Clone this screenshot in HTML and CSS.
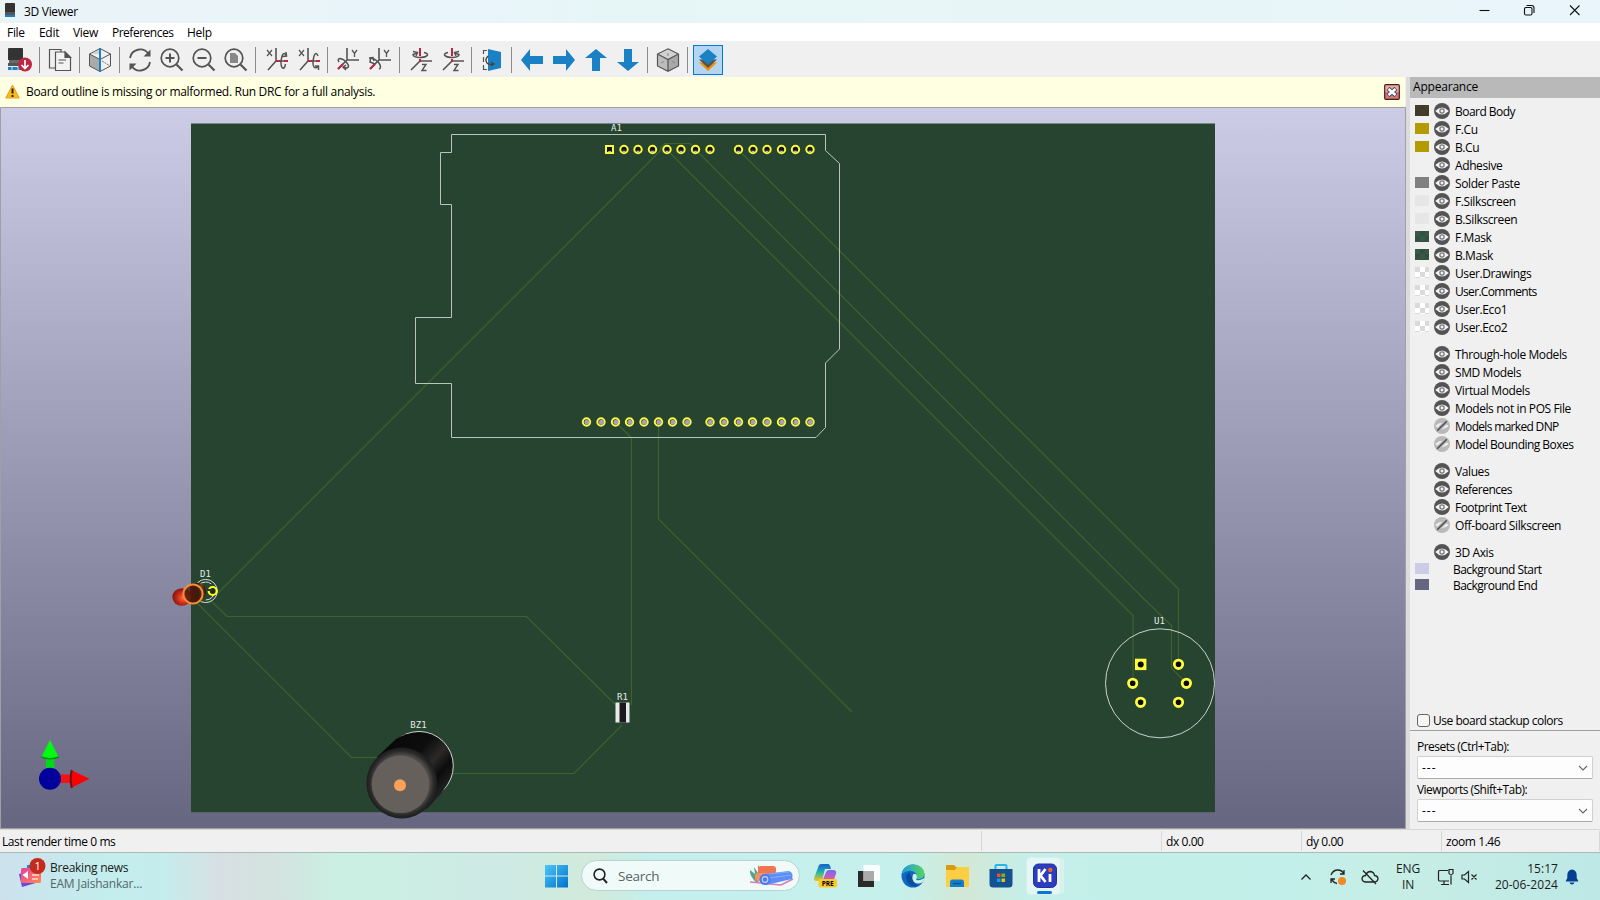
FILE: index.html
```html
<!DOCTYPE html>
<html lang="en">
<head>
<meta charset="utf-8">
<title>3D Viewer</title>
<link rel="stylesheet" href="styles.css">
</head>
<body>
<svg class="defs" width="0" height="0">
  <symbol id="eye" viewBox="0 0 16 16"><circle cx="8" cy="8" r="8" fill="#545454"/><path d="M1.2 8Q8 1 14.8 8Q8 15 1.2 8Z" fill="#f4f4f4"/><circle cx="8" cy="8" r="2.1" fill="#f4f4f4" stroke="#777" stroke-width="1.3"/></symbol>
  <symbol id="off" viewBox="0 0 16 16"><circle cx="8" cy="8" r="8" fill="#b9b9b9"/><path d="M1.2 8Q8 1.5 14.8 8Q8 14.5 1.2 8Z" fill="#efefef"/><path d="M3 13L13 3" stroke="#b9b9b9" stroke-width="4"/><path d="M3.2 12.8L12.8 3.2" stroke="#4d4d4d" stroke-width="1.5"/></symbol>
  <symbol id="rotx" viewBox="0 0 24 24"><path d="M10 0V13L2 22M10 13H22" fill="none" stroke="#545454" stroke-width="1.6"/><path d="M10 13H15M18 13H22" stroke="#bf2641" stroke-width="2"/><path d="M1 2L6 8M6 2L1 8" stroke="#545454" stroke-width="1.2"/></symbol>
  <symbol id="roty" viewBox="0 0 24 24"><path d="M11 0V12H23M11 12L2 21" fill="none" stroke="#545454" stroke-width="1.6"/><path d="M2 21L7 16" stroke="#bf2641" stroke-width="2.2"/><path d="M16 2L18.5 5.5L21 2M18.5 5.5V9" fill="none" stroke="#545454" stroke-width="1.3"/></symbol>
  <symbol id="rotz" viewBox="0 0 24 24"><path d="M1 22L10 13H22" fill="none" stroke="#545454" stroke-width="1.6"/><path d="M10 0V8M10 11V14" stroke="#bf2641" stroke-width="2"/><path d="M12 16.500H16L12 22.500H16.500" fill="none" stroke="#545454" stroke-width="1.400"/></symbol>
  <symbol id="cube" viewBox="0 0 24 24"><path d="M12 0.800L22.500 6V18L12 23.300L1.500 18V6Z" fill="#bdbdbd"/><path d="M12 .800L22.500 6L12 11.500L1.500 6Z" fill="#d2d2d2"/><path d="M12 11.500L22.500 6V18L12 23.300Z" fill="#a9a9a9"/><path d="M12 .800L22.500 6V18L12 23.300L1.500 18V6ZM1.500 6L12 11.500L22.500 6M12 11.500V23.300" fill="none" stroke="#545454" stroke-width="1.200"/><path d="M12 5V8M5 15L8 13.500M16 13.500L19 15" stroke="#888"/></symbol>
  <symbol id="lens" viewBox="0 0 24 24"><circle cx="10" cy="10" r="8.800" fill="none" stroke="#545454" stroke-width="1.700"/><path d="M16.500 16.500L22.500 22.500" stroke="#545454" stroke-width="2.200"/></symbol>
  <symbol id="arrow" viewBox="0 0 24 24"><path d="M1 12L10 1V8H23V16H10V23Z" fill="#1a81c4"/></symbol>
  <symbol id="padt" viewBox="-6 -6 12 12"><circle r="3.700" fill="#15150f" stroke="#fbfb3e" stroke-width="2"/><path d="M-1.800 1.300H1.800L1 2.700H-1Z" fill="#b5b5c8"/></symbol>
  <symbol id="padb" viewBox="-6 -6 12 12"><circle r="3.700" fill="#30302c" stroke="#fbfb3e" stroke-width="2"/><circle cx=".400" cy=".300" r="2.500" fill="#a3a2ba"/></symbol>
  <symbol id="padu" viewBox="-6 -6 12 12"><circle r="4.200" fill="#080808" stroke="#ffff40" stroke-width="2.800"/></symbol>
</svg>

<header class="title">
  <svg width="12" height="16" viewBox="0 0 12 16"><path d="M0 1Q0 0 1 0H9Q10 0 10 1V9H0Z" fill="#333"/><path d="M0 9H10V12H0Z" fill="#555"/><path d="M0 12H10V14H0Z" fill="#1a81c4"/></svg>
  <span class="title-text">3D Viewer</span>
  <svg class="winbtns" width="110" height="20" viewBox="0 0 110 20" fill="none" stroke="#111" stroke-width="1.100"><path d="M.500 10.500H10.500"/><rect x="45.500" y="7.500" width="7.500" height="7.500" rx="1.500"/><path d="M47.500 5.500H52.500Q55 5.500 55 8V13"/><path d="M91 5.500L100.500 15M100.500 5.500L91 15"/></svg>
</header>

<nav class="menu"><span class="m1">File</span><span class="m2">Edit</span><span class="m3">View</span><span class="m4">Preferences</span><span class="m5">Help</span></nav>

<div class="toolbar">
  <i><svg viewBox="0 0 24 24"><path d="M0 1Q0 0 1 0H14Q15 0 15 1V12H0Z" fill="#333"/><path d="M1 12H14V15H1Z" fill="#686868"/><path d="M0 15H15V18H0Z" fill="#545454"/><path d="M0 19H13V22H0Z" fill="#1a81c4"/><path d="M4 18V23M10 18V23" stroke="#ddd"/><circle cx="17" cy="16.500" r="7" fill="#bf2641"/><path d="M17 12V20M13.500 17L17 20.500L20.500 17" fill="none" stroke="#fff" stroke-width="1.700"/></svg></i><b></b>
  <i><svg viewBox="0 0 24 24" fill="#efefef" stroke="#545454" stroke-width="1.200"><path d="M1.500 1.500H13V20H1.500Z"/><path d="M7.500 4H17L22.500 9.500V22.500H7.500Z" fill="#f3f3f3"/><path d="M17 4V9.500H22.500Z" fill="#545454"/><path d="M10.500 12H18M10.500 15H15.500"/></svg></i><b></b>
  <i><svg viewBox="0 0 24 24"><path d="M1.500 6L12 11.500V23L1.500 18Z" fill="#aaa"/><path d="M12 .500L22.500 6V18L12 23.500L1.500 18V6ZM1.500 6L12 11.500L22.500 6" fill="none" stroke="#545454"/><path d="M11 6L3 6L11 2Z" fill="#d0d0d0"/><path d="M14 13L22 18" stroke="#777" stroke-dasharray="2 1"/><path d="M12 0V24" stroke="#1a81c4" stroke-width="2"/></svg></i><b></b>
  <i><svg viewBox="0 0 24 24" fill="none" stroke="#545454" stroke-width="1.800"><path d="M2 10A10.200 10.200 0 0 1 20.500 6M22 14A10.200 10.200 0 0 1 3.500 18"/><path d="M22.500 1.500V8.500H15.500ZM1.500 22.500V15.500H8.500Z" fill="#545454" stroke="none"/></svg></i>
  <i><svg viewBox="0 0 24 24"><use href="#lens"/><path d="M5.500 10H14.500M10 5.500V14.500" stroke="#545454" stroke-width="2"/></svg></i>
  <i><svg viewBox="0 0 24 24"><use href="#lens"/><path d="M5.500 10H14.500" stroke="#545454" stroke-width="2"/></svg></i>
  <i><svg viewBox="0 0 24 24"><use href="#lens"/><path d="M6 5H11L14 8V15H6Z" fill="#888"/></svg></i><b></b>
  <i><svg class="rx" viewBox="0 0 24 24"><use href="#rotx"/><path d="M20.500 8Q18 3 16 8Q14 16 16 19.500Q18.500 22 19.500 16M16.500 8.500L20.500 8L20 4" fill="none" stroke="#545454" stroke-width="1.500"/></svg></i>
  <i><svg class="rx" viewBox="0 0 24 24"><use href="#rotx"/><path d="M20 8Q18 3 16 8Q14 16 16 19Q18 21 20.500 18M17 18L20.500 18L20.500 22" fill="none" stroke="#545454" stroke-width="1.500"/></svg></i><b></b>
  <i><svg viewBox="0 0 24 24"><use href="#roty"/><path d="M3 14Q1 11 4 10.500Q8 11 11 15Q14 19 11 20L7 19M10 17L7 19L10 22" fill="none" stroke="#545454" stroke-width="1.500"/></svg></i>
  <i><svg viewBox="0 0 24 24"><use href="#roty"/><path d="M11 21Q14 20 11 15Q7 10 2.500 10.500L2 14L7 16M1 10L5 9.500L6 13" fill="none" stroke="#545454" stroke-width="1.500"/></svg></i><b></b>
  <i><svg class="rz" viewBox="0 0 24 24"><use href="#rotz"/><path d="M14 4.500Q18 5.500 17.500 7Q16 9.500 9 9.500Q3 9 3 6.500L7 5M3 3.500L7.500 4.500L6 8" fill="none" stroke="#545454" stroke-width="1.500"/></svg></i>
  <i><svg class="rz" viewBox="0 0 24 24"><use href="#rotz"/><path d="M6 4.500Q2 5.500 2.500 7Q4 9.500 11 9.500Q17 9 17 6.500L13 5M17 3.500L12.500 4.500L14 8" fill="none" stroke="#545454" stroke-width="1.500"/></svg></i><b></b>
  <i><svg viewBox="0 0 24 24"><path d="M8 1L21 4V20L8 23Z" fill="#1a81c4"/><path d="M7 2.500H3.500V6M3.500 9V14M3.500 17V21.500H7" fill="none" stroke="#545454" stroke-width="1.200"/><path d="M8 8Q4.500 12 7 15Q9 17 13 16M11 14L14 16L11 18" fill="none" stroke="#454545" stroke-width="1.300"/></svg></i><b></b>
  <i><svg viewBox="0 0 24 24"><use href="#arrow"/></svg></i>
  <i><svg viewBox="0 0 24 24"><use href="#arrow" transform="rotate(180 12 12)"/></svg></i>
  <i><svg viewBox="0 0 24 24"><use href="#arrow" transform="rotate(90 12 12)"/></svg></i>
  <i><svg viewBox="0 0 24 24"><use href="#arrow" transform="rotate(-90 12 12)"/></svg></i><b></b>
  <i><svg viewBox="0 0 24 24"><use href="#cube"/></svg></i><b></b>
  <i class="active"><svg viewBox="0 0 24 24"><path d="M3 14.500L12 23L21 14.500H3Z" fill="#f29100"/><path d="M3 11.500H21L12 20Z" fill="#545454"/><path d="M12 1L21 8.500L12 16.500L3 8.500Z" fill="#1a81c4"/></svg></i>
</div>

<main class="work">
  <section class="view">
    <div class="warn">
      <svg width="15" height="15" viewBox="0 0 15 15"><path d="M7.500 1L14.300 14H.700Z" fill="#fdb913" stroke="#e2a32e" stroke-linejoin="round"/><path d="M7.500 4.500V9.500M7.500 11V13" stroke="#222" stroke-width="1.900"/></svg>
      <span class="warn-text">Board outline is missing or malformed. Run DRC for a full analysis.</span>
      <svg class="dismiss" width="16" height="16" viewBox="0 0 16 16"><rect x=".700" y=".700" width="14.600" height="14.600" rx="1" fill="#cf786f" stroke="#521920" stroke-width="1.200"/><path d="M1.500 1.500H14.500V8H1.500Z" fill="#e5aaa2"/><path d="M4 4.500L12 11.500M12 4.500L4 11.500" stroke="#4c5468" stroke-width="4.500"/><path d="M4.500 5L11.500 11M11.500 5L4.500 11" stroke="#fff" stroke-width="2.400"/></svg>
    </div>
    <svg class="scene" width="1406" height="722" viewBox="0 107 1406 722">
      <defs>
        <linearGradient id="bg" x2="0" y2="1"><stop stop-color="#cccce6"/><stop offset="1" stop-color="#666680"/></linearGradient>
        <linearGradient id="side" gradientUnits="userSpaceOnUse" x1="385" y1="745" x2="440" y2="795"><stop stop-color="#080808"/><stop offset=".400" stop-color="#0e0e0e"/><stop offset=".620" stop-color="#2b2a29"/><stop offset=".800" stop-color="#0c0c0c"/><stop offset="1" stop-color="#222"/></linearGradient>
        <radialGradient id="rim"><stop offset=".800" stop-color="#4b4846"/><stop offset=".900" stop-color="#2c2b2b"/><stop offset="1" stop-color="#1c1c1c"/></radialGradient>
        <radialGradient id="led" cx=".580" cy=".550"><stop stop-color="#ff7040"/><stop offset=".500" stop-color="#d8361c"/><stop offset="1" stop-color="#931a12"/></radialGradient>
        <linearGradient id="brown"><stop stop-color="#7a1d10"/><stop offset=".500" stop-color="#3a1d0c"/><stop offset=".700" stop-color="#6a4a16"/><stop offset="1" stop-color="#2b1408"/></linearGradient>
      </defs>
      <rect y="107" width="1406" height="722" fill="url(#bg)"/>
      <path d="M.500 829V107.500H1405.500V829M0 828.500H1406" fill="none" stroke="#a0a0a0"/>
      <rect x="191" y="123.500" width="1024" height="688.700" fill="#264430"/>
      <g fill="none" stroke="#3f612e" stroke-width="1.200">
        <path d="M218 593L660.500 150.500V148L665 143.500H690L696 150L1145 600L1171.500 625.500V668L1186 683"/>
        <path d="M667 150L1133 615.500V683"/><path d="M738.500 150L1178.500 589V664"/>
        <path d="M615.500 422L631.500 438V705"/><path d="M658.500 422V519L852 712"/>
        <path d="M210 600L227 616.500H526.500L617 706"/><path d="M197 603L351.500 757.500H385"/><path d="M450 773.500H574L622 725"/>
      </g>
      <path d="M451.500 134.500H825.500V150.500L839.500 163.500V349L825.500 363V427.500L816 437.500H451.500V383.500H415.500V317.500H451.500V204.500H440.500V152.500H451.500Z" fill="none" stroke="#b9c5bc"/>
      <g class="silk"><text x="616.500" y="131">A1</text><text x="205.500" y="577">D1</text><text x="622.500" y="700">R1</text><text x="418.500" y="728">BZ1</text><text x="1159.500" y="624">U1</text></g>
      <rect x="606" y="146" width="7" height="7" fill="#15150f" stroke="#fbfb3e" stroke-width="2"/><path d="M608 151H611.500L611 152H608.500Z" fill="#b5b5c8"/>
      <g>
        <use href="#padt" x="618" y="143.500" width="12" height="12"/><use href="#padt" x="632" y="143.500" width="12" height="12"/><use href="#padt" x="646.500" y="143.500" width="12" height="12"/><use href="#padt" x="661" y="143.500" width="12" height="12"/><use href="#padt" x="675" y="143.500" width="12" height="12"/><use href="#padt" x="689.500" y="143.500" width="12" height="12"/><use href="#padt" x="704" y="143.500" width="12" height="12"/>
        <use href="#padt" x="732.500" y="143.500" width="12" height="12"/><use href="#padt" x="747" y="143.500" width="12" height="12"/><use href="#padt" x="761" y="143.500" width="12" height="12"/><use href="#padt" x="775.500" y="143.500" width="12" height="12"/><use href="#padt" x="789.500" y="143.500" width="12" height="12"/><use href="#padt" x="804" y="143.500" width="12" height="12"/>
      </g>
      <g>
        <use href="#padb" x="580.500" y="416" width="12" height="12"/><use href="#padb" x="595" y="416" width="12" height="12"/><use href="#padb" x="609.500" y="416" width="12" height="12"/><use href="#padb" x="623.500" y="416" width="12" height="12"/><use href="#padb" x="638" y="416" width="12" height="12"/><use href="#padb" x="652.500" y="416" width="12" height="12"/><use href="#padb" x="666.500" y="416" width="12" height="12"/><use href="#padb" x="681" y="416" width="12" height="12"/>
        <use href="#padb" x="704" y="416" width="12" height="12"/><use href="#padb" x="718" y="416" width="12" height="12"/><use href="#padb" x="732.500" y="416" width="12" height="12"/><use href="#padb" x="746.500" y="416" width="12" height="12"/><use href="#padb" x="761" y="416" width="12" height="12"/><use href="#padb" x="775.500" y="416" width="12" height="12"/><use href="#padb" x="789.500" y="416" width="12" height="12"/><use href="#padb" x="804" y="416" width="12" height="12"/>
      </g>
      <circle cx="1160" cy="683.300" r="54.500" fill="none" stroke="#c9d3cb"/>
      <rect x="1136.500" y="660.200" width="8.400" height="8.400" fill="#ffff40" stroke="#ffff40" stroke-width="3"/><circle cx="1140.700" cy="664.400" r="3" fill="#080808"/>
      <use href="#padu" x="1172.500" y="658.300" width="12" height="12"/><use href="#padu" x="1126.700" y="677.300" width="12" height="12"/><use href="#padu" x="1180.400" y="677.300" width="12" height="12"/><use href="#padu" x="1134.600" y="696.300" width="12" height="12"/><use href="#padu" x="1172.500" y="696.300" width="12" height="12"/>
      <g class="resistor"><rect x="615.500" y="702.500" width="14" height="20" fill="#e9e9e9"/><rect x="619.500" y="702.500" width="6.500" height="20" fill="#1a1a1a"/></g>
      <g class="buzzer"><circle cx="419" cy="765.800" r="34.300" fill="url(#side)" stroke="#cdd8d0"/><path d="M377 757L396 739Q410 730 430 734Q450 742 451.500 765Q451 781 440 795L427 809Z" fill="url(#side)"/><circle cx="401.800" cy="783" r="35.400" fill="url(#rim)"/><circle cx="400.500" cy="784.300" r="28.800" fill="#65605c"/><circle cx="400" cy="785.300" r="6" fill="#ffa057"/></g>
      <g class="diode" fill="none"><circle cx="205.700" cy="591" r="11.600" stroke="#d4ddd6"/><circle cx="205.700" cy="591" r="9" stroke="#d4ddd6" stroke-dasharray="14 3"/><circle cx="212.700" cy="591" r="4" fill="#1b2b1c" stroke="#ffff20" stroke-width="2.200"/><path d="M207 590H212" stroke="#333" stroke-width="2"/><path d="M190 585L196 583Q206 582 206 592Q205 601 196 604H190Z" fill="url(#brown)"/><ellipse cx="181.800" cy="597" rx="9.500" ry="8.800" fill="url(#led)"/><circle cx="193" cy="594" r="9.600" fill="#45180b" fill-opacity=".750" stroke="#f58d35" stroke-width="2"/></g>
      <g class="axes"><path d="M46 757H54.500V771H46Z" fill="#00d818"/><path d="M50 740L59 758H41Z" fill="#00fa12"/><path d="M41 757Q50 760.500 59 757" fill="none" stroke="#088a14" stroke-width="1.500"/><path d="M60 774.500H73V783H60Z" fill="#f01414"/><path d="M71 770L89.500 778.700L71 788Z" fill="#f00"/><path d="M71.800 770Q69.500 779 71.800 788" fill="none" stroke="#701010" stroke-width="2"/><circle cx="50" cy="778.800" r="11" fill="#00009d"/></g>
    </svg>
  </section>

  <aside class="panel">
    <h1>Appearance</h1>
    <ul class="layers">
      <li><em class="body"></em><svg><use href="#eye"/></svg><span class="tight">Board Body</span></li>
      <li><em class="cu"></em><svg><use href="#eye"/></svg><span>F.Cu</span></li>
      <li><em class="cu"></em><svg><use href="#eye"/></svg><span>B.Cu</span></li>
      <li><em></em><svg><use href="#eye"/></svg><span>Adhesive</span></li>
      <li><em class="paste"></em><svg><use href="#eye"/></svg><span>Solder Paste</span></li>
      <li><em class="ss"></em><svg><use href="#eye"/></svg><span>F.Silkscreen</span></li>
      <li><em class="ss"></em><svg><use href="#eye"/></svg><span>B.Silkscreen</span></li>
      <li><em class="mask"></em><svg><use href="#eye"/></svg><span>F.Mask</span></li>
      <li><em class="mask"></em><svg><use href="#eye"/></svg><span>B.Mask</span></li>
      <li><em class="clear"></em><svg><use href="#eye"/></svg><span>User.Drawings</span></li>
      <li><em class="clear"></em><svg><use href="#eye"/></svg><span class="tighter">User.Comments</span></li>
      <li><em class="clear"></em><svg><use href="#eye"/></svg><span>User.Eco1</span></li>
      <li><em class="clear"></em><svg><use href="#eye"/></svg><span>User.Eco2</span></li>
      <li class="gap"><em></em><svg><use href="#eye"/></svg><span>Through-hole Models</span></li>
      <li><em></em><svg><use href="#eye"/></svg><span>SMD Models</span></li>
      <li><em></em><svg><use href="#eye"/></svg><span>Virtual Models</span></li>
      <li><em></em><svg><use href="#eye"/></svg><span>Models not in POS File</span></li>
      <li><em></em><svg><use href="#off"/></svg><span class="tighter">Models marked DNP</span></li>
      <li><em></em><svg><use href="#off"/></svg><span class="tight">Model Bounding Boxes</span></li>
      <li class="gap"><em></em><svg><use href="#eye"/></svg><span>Values</span></li>
      <li><em></em><svg><use href="#eye"/></svg><span class="tight">References</span></li>
      <li><em></em><svg><use href="#eye"/></svg><span class="tight">Footprint Text</span></li>
      <li><em></em><svg><use href="#off"/></svg><span>Off-board Silkscreen</span></li>
      <li class="gap"><em></em><svg><use href="#eye"/></svg><span>3D Axis</span></li>
      <li class="short"><em class="start"></em><span class="tight">Background Start</span></li>
      <li class="short"><em class="end"></em><span class="tight">Background End</span></li>
    </ul>
    <div class="stackup"><s></s><span>Use board stackup colors</span></div>
    <div class="presets">
      <label>Presets (Ctrl+Tab):</label>
      <div class="select"><span>---</span><svg width="10" height="6" viewBox="0 0 10 6"><path d="M1 1L5 5L9 1" fill="none" stroke="#666" stroke-width="1.100"/></svg></div>
      <label>Viewports (Shift+Tab):</label>
      <div class="select"><span>---</span><svg width="10" height="6" viewBox="0 0 10 6"><path d="M1 1L5 5L9 1" fill="none" stroke="#666" stroke-width="1.100"/></svg></div>
    </div>
  </aside>
</main>

<div class="status"><span>Last render time 0 ms</span><span></span><span>dx 0.00</span><span>dy 0.00</span><span>zoom 1.46</span></div>

<footer class="taskbar">
  <div class="news">
    <svg width="30" height="32" viewBox="0 0 30 32"><defs><linearGradient id="pk" x2="1" y2="1"><stop stop-color="#e8409c"/><stop offset="1" stop-color="#ff8a4c"/></linearGradient></defs><path d="M2 17L20 12L22 25L5 30Z" fill="#6a45e0"/><path d="M10 8H20V16H10Z" fill="#2c7bd6"/><rect x="4" y="11" width="20" height="15" rx="1.500" fill="url(#pk)"/><path d="M5.500 18L11 14V22Z" fill="#fff"/><path d="M15 18H22M15 22H21" stroke="#ffd9cf" stroke-width="1.500"/><circle cx="20.500" cy="9" r="8" fill="#c42b1c"/><text x="20.500" y="13" class="badge">1</text></svg>
    <div><p class="n1">Breaking news</p><p class="n2">EAM Jaishankar...</p></div>
  </div>
  <div class="dock">
    <svg class="start-logo" width="24" height="24" viewBox="0 0 24 24"><defs><linearGradient id="win" x2="1" y2="1"><stop stop-color="#4cc8f5"/><stop offset="1" stop-color="#0070cf"/></linearGradient></defs><path d="M1 1H12V11.500H1ZM13 1H24V11.500H13ZM1 12.500H12V23.500H1ZM13 12.500H24V23.500H13Z" fill="url(#win)"/></svg>
    <div class="search"><svg width="15" height="16" viewBox="0 0 15 16"><circle cx="6.500" cy="6.500" r="5.400" fill="none" stroke="#222" stroke-width="1.600"/><path d="M10 10.500L14 15" stroke="#222" stroke-width="1.900"/></svg><span>Search</span>
      <svg class="yoga" width="46" height="24" viewBox="0 0 46 24"><path d="M8 19Q0 12 1 6L6 10L5 3L9 9V1Q14 8 11 16Z" fill="#55a58a"/><rect x="9" y="2" width="18" height="8" rx="3" fill="#ef7650"/><rect x="6" y="9" width="20" height="8" rx="3" fill="#f5916a"/><path d="M1 18L32 21L44 15" fill="none" stroke="#de79b4" stroke-width="1.500"/><path d="M15 10L40 7Q45 9 43 15L17 21Z" fill="#5c8ef5"/><path d="M20 10L40 8M20 14L42 11" stroke="#83adff"/><circle cx="16" cy="15.500" r="5.500" fill="#4d7ae8"/><circle cx="16" cy="15.500" r="2.800" fill="none" stroke="#c0d2ff" stroke-width="1.200"/></svg>
    </div>
    <svg class="app" width="24" height="24" viewBox="0 1 24 24"><defs><linearGradient id="cp" x2="0" y2="1"><stop stop-color="#1261d0"/><stop offset=".500" stop-color="#27b6a6"/><stop offset="1" stop-color="#ffc21c"/></linearGradient><linearGradient id="cq" x2="0" y2="1"><stop stop-color="#7b66ee"/><stop offset="1" stop-color="#f0599a"/></linearGradient></defs><path d="M6 2Q7 1 9 1H15Q17 1 18 6H12L9 18H3Q0 18 1.500 14Z" fill="url(#cp)"/><path d="M16 7H20Q24 7 23 11L20 19H9L13 9Q14 7 16 7Z" fill="url(#cq)"/><rect x="5.500" y="16" width="18.500" height="8.500" rx="2" fill="#ffcb20"/><text x="14.700" y="23" class="pre">PRE</text></svg>
    <svg class="app" width="24" height="24" viewBox="0 0 24 24"><path d="M1 7H17V23H1Z" fill="#2a2a2a"/><path d="M6.500 1H23V17H6.500Z" fill="#fff" fill-opacity=".880"/><path d="M6.500 7H17V17H6.500Z" fill="#aaa"/></svg>
    <svg class="app" width="24" height="24" viewBox="0 0 24 24"><defs><linearGradient id="ed" x2="1"><stop stop-color="#1b9de2"/><stop offset="1" stop-color="#55d65a"/></linearGradient></defs><circle cx="12" cy="12" r="11.500" fill="#1267c4"/><path d="M.600 10Q3 .500 12 .500Q23 1 23.500 10Q23 16 15 15Q17 12 15 9.500Q10 4 .600 10Z" fill="url(#ed)"/><path d="M15 15Q8 13 9 8Q3 11 6 17Q9 24 17 22Q11 18 11 13Z" fill="#0a4c9c"/><path d="M12.500 10Q10 14 13 18Q17 21 22 18L23.500 14Q16 18 15 15Q17 13 15 10Z" fill="#ccefe9"/></svg>
    <svg class="app" width="24" height="24" viewBox="0 0 24 24"><path d="M1 2Q1 1 2 1H9L11 3H23V22H1Z" fill="#d89a0c"/><path d="M1 6H10L12 3H24V22Q24 23 23 23H1Z" fill="#fcce42"/><path d="M5 18Q5 15.500 7 15.500H17Q19 15.500 19 18V23H5Z" fill="#147dcc"/><path d="M8 19.500H16" stroke="#0a5494" stroke-width="1.500"/></svg>
    <svg class="app" width="24" height="24" viewBox="0 0 24 24"><path d="M6.500 6V2Q6.500 1 7.500 1H16.500Q17.500 1 17.500 2V6" fill="none" stroke="#28b4f0" stroke-width="2"/><path d="M.500 5H23.500V20Q23.500 23.500 20 23.500H4Q.500 23.500 .500 20Z" fill="#155091"/><path d="M8 9.500H11.500V13H8Z" fill="#f25022"/><path d="M12.500 9.500H16V13H12.500Z" fill="#7fba00"/><path d="M8 14.500H11.500V18H8Z" fill="#00a4ef"/><path d="M12.500 14.500H16V18H12.500Z" fill="#ffb900"/></svg>
    <div class="kicad"><svg width="24" height="26" viewBox="0 0 24 26"><rect x=".500" y="1" width="23" height="23.500" rx="5" fill="#2c3dbe" stroke="#2030a5"/><path d="M6 6V19M12.500 6L7.500 12.500L12.500 19" fill="none" stroke="#fff" stroke-width="2.800"/><path d="M17 11V19" stroke="#fff" stroke-width="2.800"/><circle cx="17.300" cy="7" r="2.200" fill="#f26522"/></svg><u></u></div>
  </div>
  <div class="tray">
    <svg class="chev" width="12" height="8" viewBox="0 0 12 8"><path d="M1.500 6.500L6 2L10.500 6.500" fill="none" stroke="#222" stroke-width="1.300"/></svg>
    <svg class="sync" width="18" height="18" viewBox="0 0 18 18" fill="none" stroke="#222" stroke-width="1.300"><path d="M2 7Q4 2 9 2Q13 2 15 6M15 2V6H11M2 15V11H6M2.500 11.500Q5 15 8 15.500"/><circle cx="13" cy="13" r="4" fill="#f08a24" stroke="none"/></svg>
    <svg class="cloud" width="18" height="16" viewBox="0 0 18 16" fill="none" stroke="#222" stroke-width="1.300"><path d="M4.500 13Q1 12.500 1 9.500Q1.500 6.500 4.500 6.500Q6 2.500 9.500 2.500Q13 3 13.500 6.500Q17 7 17 10Q16.500 13 13.500 13H4.500M2 1.500L15 15"/></svg>
    <div class="lang">ENG<br>IN</div>
    <svg class="net" width="18" height="18" viewBox="0 0 18 18" fill="none" stroke="#222" stroke-width="1.200"><path d="M11 2.500H2.500Q1.500 2.500 1.500 3.500V12Q1.500 13 2.500 13H12M7 13V16M4 16.500H12"/><path d="M12 1.500H16V5.500Q14 8 12 5.500ZM14 7.500V16.500"/></svg>
    <svg class="vol" width="17" height="14" viewBox="0 0 17 14" fill="none" stroke="#222" stroke-width="1.200"><path d="M1 5V9H3.500L7.500 12.500V1.500L3.500 5ZM10.500 4.500L15.500 9.500M15.500 4.500L10.500 9.500"/></svg>
    <div class="clock">15:17<br>20-06-2024</div>
    <svg class="bell" width="14" height="16" viewBox="0 0 14 16"><path d="M7 .500Q11.500 1 11.700 6V9L13.500 12.500H.500L2.300 9V6Q2.500 1 7 .500ZM4.500 13.500H9.500Q9 15.500 7 15.500Q5 15.500 4.500 13.500Z" fill="#063f91"/></svg>
  </div>
</footer>
</body>
</html>
```

FILE: styles.css
```css
* { box-sizing: border-box; }
body { margin: 0; width: 1600px; height: 900px; overflow: hidden; display: flex; flex-direction: column; background: #f0f0f0; color: #000; font: 12px/16px "Open Sans", "Noto Sans", sans-serif; letter-spacing: -.3px; }
span, label { white-space: nowrap; }
svg { display: block; flex: none; }
.defs { position: absolute; }

.title { height: 23px; flex: none; display: flex; padding: 3px 11px 0 5px; background: linear-gradient(90deg, #eaf4f7, #e9f4fb 30%, #e6f6f6 38%, #e8f5f7 70%, #e9f5fb); }
.title-text { margin: 1px auto 0 7px; }
.winbtns { margin: -3px 0 0 0; }
.menu { height: 18px; flex: none; display: flex; padding: 2px 0 0 7px; background: #fff; }
.m1 { width: 32px; } .m2 { width: 34px; } .m3 { width: 39px; } .m4 { width: 75px; letter-spacing: -.5px; }

.toolbar { height: 36px; flex: none; display: flex; padding: 3px 4px; background: #f0f0f0; }
.toolbar i { width: 32px; height: 32px; padding: 4px; }
.toolbar i svg { width: 24px; height: 24px; }
.toolbar .rx { margin-left: 1.500px; }
.toolbar .rz { margin-left: 2px; }
.toolbar b { width: 1px; height: 26px; margin: 3px 4px 0 3px; background: #8c8c8c; }
.toolbar .active { width: 30px; height: 30px; margin: 1px; padding: 3px; background: #b3d5f2; outline: 1px solid #0078d7; outline-offset: -1px; }

.work { height: 752px; flex: none; display: flex; }
.view { width: 1406px; }
.warn { height: 30px; width: 1405px; display: flex; align-items: center; padding: 0 6px 1px 5px; background: #ffffe1; }
.warn-text { margin: 0 auto 0 6px; }
.dismiss { margin-right: -1px; }
.silk { fill: #e3ebe5; font: 9px "DejaVu Sans Mono", monospace; text-anchor: middle; letter-spacing: 0; }

.panel { flex: 1; display: flex; flex-direction: column; border-left: 4px solid #dcdcdc; }
.panel h1 { margin: 0; height: 21px; padding: 2px 3px; background: #b9b9b9; font-size: 12px; font-weight: 400; line-height: 16px; letter-spacing: -.2px; }
.layers { list-style: none; margin: 0; padding: 4px 0 0 5px; height: 605px; letter-spacing: -.4px; }
.layers li { height: 18px; display: flex; align-items: center; }
.layers span { padding-top: 1px; }
.layers .tight { letter-spacing: -.53px; }
.layers .tighter { letter-spacing: -.68px; }
.layers svg { width: 16px; height: 16px; margin: 0 5px; }
.layers em { width: 14px; height: 11px; margin-bottom: 1px; }
.layers .gap { margin-top: 9px; }
.layers .short { height: 16px; }
.short span { margin-left: 24px; }
.body { background: repeating-conic-gradient(#403a28 0 25%, #473f2b 0 50%) 0 0 / 10px 10px; }
.cu { background: #b39b00; } .paste { background: #808080; } .ss { background: #e6e6e6; }
.mask { background: repeating-conic-gradient(#32503f 0 25%, #3a5747 0 50%) 0 0 / 10px 10px; }
.clear { background: repeating-conic-gradient(#fff 0 25%, #dadada 0 50%) 0 0 / 10px 10px; }
.start { background: #cccce6; } .end { background: #666680; }
.stackup { height: 28px; display: flex; align-items: center; padding: 7px 7px 0; gap: 3px; border-bottom: 1px solid #a0a0a0; letter-spacing: -.48px; }
.stackup span { padding-top: 1px; }
.stackup s { width: 13px; height: 13px; border: 1px solid #666; border-radius: 3px; background: #f6f6f6; }
.presets { padding: 8px 7px 0; display: flex; flex-direction: column; }
.presets label { height: 17px; line-height: 16px; letter-spacing: -.53px; }
.select { width: 176px; height: 23px; margin-bottom: 3px; padding: 0 4px; display: flex; align-items: center; justify-content: space-between; background: #fdfdfd; border: 1px solid #d0d0d0; border-bottom-color: #aaa; border-radius: 2px; letter-spacing: 1px; }

.status { height: 23px; flex: none; display: grid; grid-template-columns: 982px 180px 140px 140px 1fr; border-top: 1px solid #d7d7d7; background: #f0f0f0; letter-spacing: -.42px; }
.status span { margin-top: 1px; height: 20px; padding: 3px 2px; border-right: 1px solid #d7d7d7; }
.status span + span { padding-left: 4px; }

.taskbar { height: 48px; flex: none; display: flex; border-top: 1px solid #a9bbb9; color: #1b1b1b; background: linear-gradient(90deg, #cce1ec 0, #c3eeed 110px, #c6eced 165px, #d7dfe2 220px, #d3e3df 280px, #cbf0e3 340px, #cdeae4 500px, #d1eadb 595px, #c4efec 650px, #c5f0ec 900px, #d3e8d6 965px, #c4efea 1030px, #c2efe9 1300px, #c7eee5 1400px, #bde8e6 1600px); }
.news { width: 525px; display: flex; padding: 4px 0 0 17px; gap: 3px; }
.news p { margin: 0; height: 16px; line-height: 16px; }
.news div { padding-top: 3px; }
.n1 { letter-spacing: -.25px; }
.n2 { color: #52666a; letter-spacing: -.2px; }
.badge { fill: #fff; font: 11px "Open Sans", sans-serif; text-anchor: middle; }
.dock { width: 775px; display: flex; align-items: flex-start; padding: 11px 0 0 19px; }
.search { width: 219px; height: 31px; margin: -4px 13px 0 13px; padding: 0 4px 0 11px; display: flex; align-items: center; border-radius: 16px; border: 1px solid #b6d5d1; background: #f0faf9; color: #5a6464; font-size: 13.500px; letter-spacing: -.25px; }
.search span { margin: 0 auto 0 10px; }
.app { margin-right: 20px; }
.pre { font: bold 6.500px "Open Sans", sans-serif; text-anchor: middle; letter-spacing: 0; }
.kicad { width: 35px; height: 38px; margin: -7px 0 0 -7px; padding: 5px 4px 0 6px; border-radius: 4px; background: #e5f7f4; border: 1px solid #d9eeea; box-shadow: 4px 0 0 -1px #daf2ee; }
.kicad u { display: block; width: 15px; height: 3px; margin: 2px 0 0 4px; border-radius: 2px; background: #0a78d0; }
.tray { flex: 1; display: flex; align-items: center; }
.sync { margin-left: 17px; } .cloud { margin-left: 14px; } .net { margin-left: 14px; } .vol { margin-left: 6px; } .bell { margin-left: 7px; }
.lang { width: 30px; margin-left: 14px; padding-top: 1px; text-align: center; letter-spacing: -.2px; }
.clock { width: 80px; text-align: right; letter-spacing: .05px; }
```
